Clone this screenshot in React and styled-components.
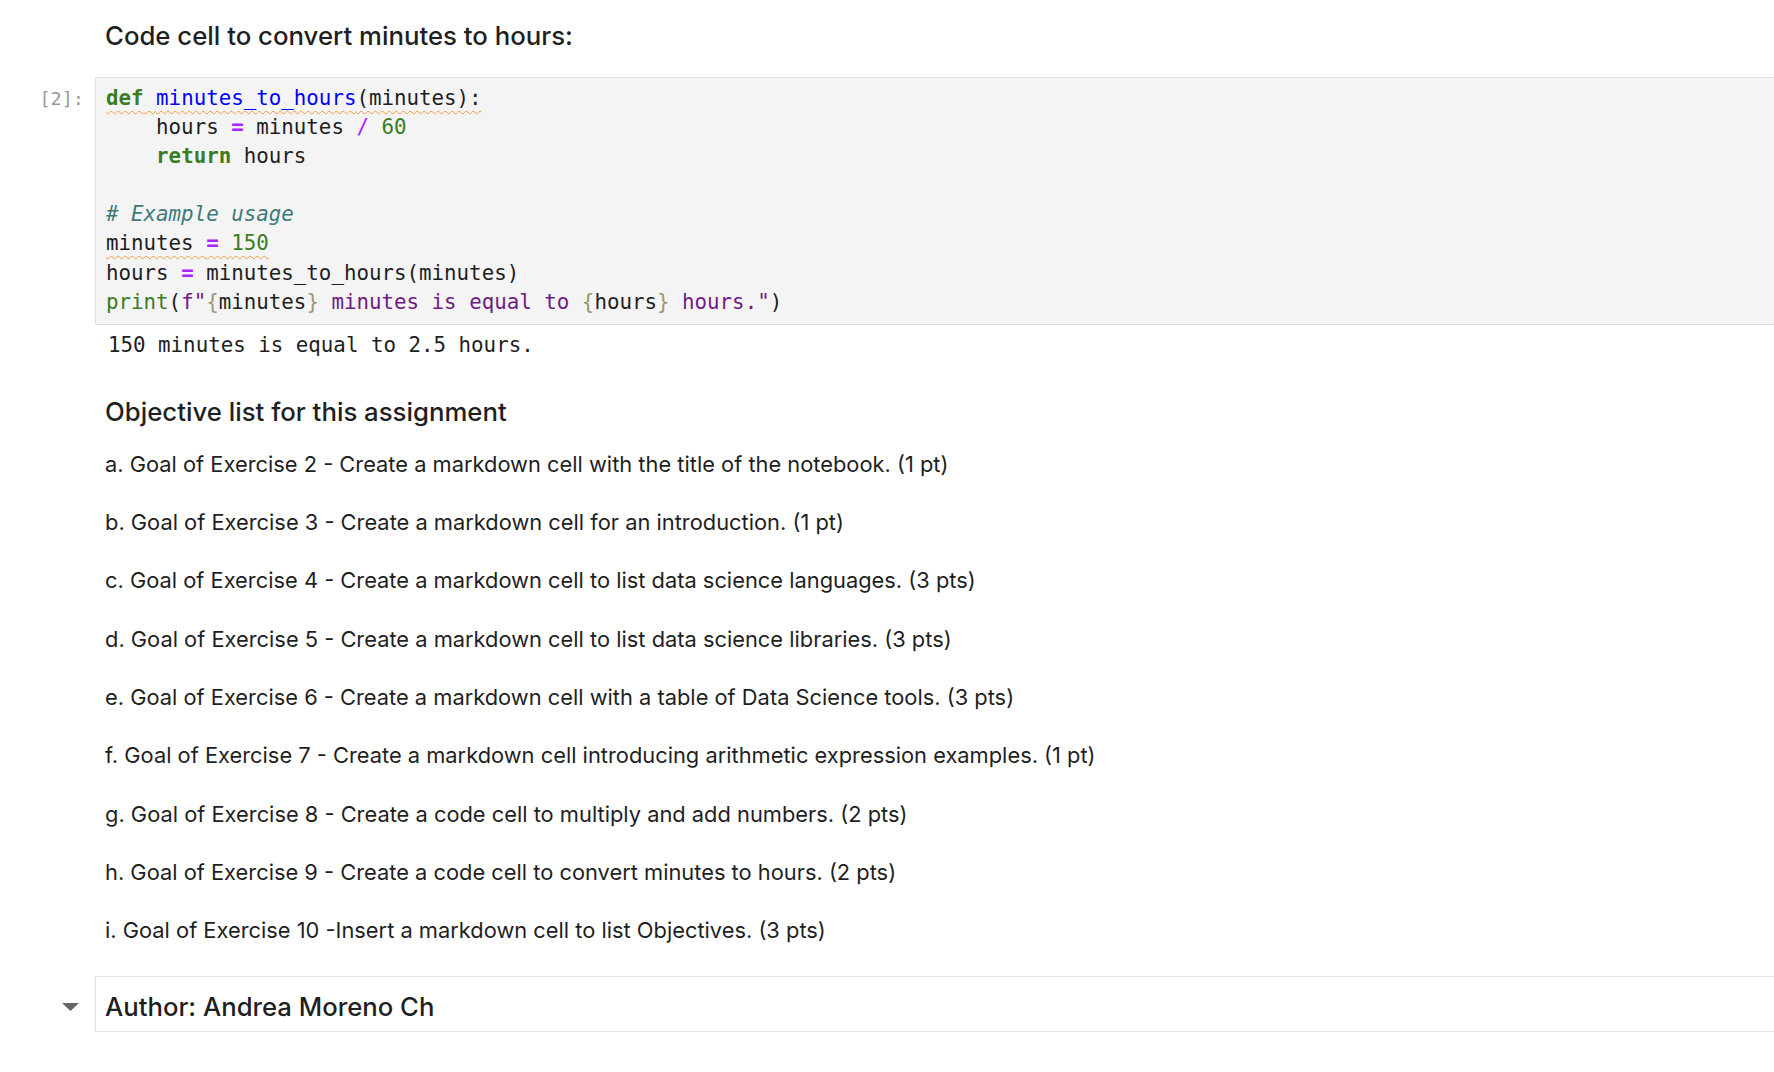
import React from 'react'
import styled, { createGlobalStyle } from 'styled-components'

// page reset + default fonts
const GlobalStyle = createGlobalStyle`
  html, body {
    margin: 0;
    padding: 0;
    background: #ffffff;
  }
  body {
    overflow: hidden;
    font-family: Inter, "Noto Sans", sans-serif;
    color: #212121;
  }
`

const Notebook = styled.main`
  display: flex;
  flex-direction: column;
  padding-top: 19px;
`

// every cell: prompt column on the left, content on the right
const Cell = styled.section`
  display: grid;
  grid-template-columns: 95px 1fr;
  margin-top: ${p => p.$gap || 0}px;
`

const Prompt = styled.div`
  display: flex;
  justify-content: flex-end;
  padding: 7px 11px 0 0;
  font-family: "DejaVu Sans Mono", monospace;
  font-size: 18.5px;
  line-height: 29px;
  color: #9a9a9a;
`

const Markdown = styled.div`
  padding-left: 10px;
`

const Heading = styled.h4`
  margin: 0;
  font-size: 25.75px;
  font-weight: 500;
  line-height: 34px;
  color: #1f1f1f;
`

const ObjectiveList = styled.div`
  display: flex;
  flex-direction: column;
  gap: 28.3px;
  margin-top: 20px;
`

const Item = styled.p`
  margin: 0;
  font-size: 21.85px;
  line-height: 30px;
  color: #1f1f1f;
`

// code editor box
const Editor = styled.pre`
  margin: 0 -2px 0 0;
  padding: 6px 10px 7px;
  background: #f4f4f4;
  border: 1px solid #e0e0e0;
  font-family: "DejaVu Sans Mono", monospace;
  font-size: 20.8px;
  line-height: 29.1px;
  color: #1e1e1e;
  white-space: pre;
`

const Tok = styled.span`
  color: ${p => p.$c || 'inherit'};
  font-weight: ${p => (p.$bold ? 700 : 400)};
  font-style: ${p => (p.$italic ? 'italic' : 'normal')};
`

const Squiggle = styled.span`
  text-decoration: underline wavy #f39a3c;
  text-decoration-thickness: 1px;
  text-underline-offset: 5px;
`

const Output = styled.div`
  margin-top: 6px;
  padding-left: 13px;
  font-family: "DejaVu Sans Mono", monospace;
  font-size: 20.8px;
  line-height: 29.1px;
  color: #1e1e1e;
  white-space: pre;
`

const Collapser = styled.div`
  display: flex;
  justify-content: flex-end;
  align-items: center;
  padding: 6px 16px 0 0;
`

const AuthorBox = styled.div`
  margin-right: -2px;
  padding: 13px 9px 7px;
  border: 1px solid #e0e0e0;
`

const AuthorTitle = styled.h3`
  margin: 0;
  font-size: 25.7px;
  font-weight: 500;
  line-height: 34px;
  color: #1f1f1f;
`

const GREEN = '#3a7d1f'
const BLUE = '#0000ff'
const OP = '#aa22ff'
const STR = '#701a86'
const BRACE = '#999972'
const COMMENT = '#3f7a7a'

const objectives = [
  'a. Goal of Exercise 2 - Create a markdown cell with the title of the notebook. (1 pt)',
  'b. Goal of Exercise 3 - Create a markdown cell for an introduction. (1 pt)',
  'c. Goal of Exercise 4 - Create a markdown cell to list data science languages. (3 pts)',
  'd. Goal of Exercise 5 - Create a markdown cell to list data science libraries. (3 pts)',
  'e. Goal of Exercise 6 - Create a markdown cell with a table of Data Science tools. (3 pts)',
  'f. Goal of Exercise 7 - Create a markdown cell introducing arithmetic expression examples. (1 pt)',
  'g. Goal of Exercise 8 - Create a code cell to multiply and add numbers. (2 pts)',
  'h. Goal of Exercise 9 - Create a code cell to convert minutes to hours. (2 pts)',
  'i. Goal of Exercise 10 -Insert a markdown cell to list Objectives. (3 pts)',
]

const CaretDown = () => (
  <svg width="17" height="8" viewBox="0 0 17 8">
    <path d="M0 0 H17 L8.5 8 Z" fill="#666666" />
  </svg>
)

export default function App() {
  return (
    <>
      <GlobalStyle />
      <Notebook>
        <Cell>
          <div />
          <Markdown>
            <Heading>Code cell to convert minutes to hours:</Heading>
          </Markdown>
        </Cell>

        <Cell $gap={24}>
          <Prompt>[2]:</Prompt>
          <Editor>
            <Squiggle>
              <Tok $c={GREEN} $bold>def</Tok> <Tok $c={BLUE}>minutes_to_hours</Tok>(minutes):
            </Squiggle>
            {'\n    hours '}
            <Tok $c={OP} $bold>=</Tok> minutes <Tok $c={OP}>/</Tok> <Tok $c={GREEN}>60</Tok>
            {'\n    '}
            <Tok $c={GREEN} $bold>return</Tok> hours
            {'\n\n'}
            <Tok $c={COMMENT} $italic># Example usage</Tok>
            {'\n'}
            <Squiggle>
              minutes <Tok $c={OP} $bold>=</Tok> <Tok $c={GREEN}>150</Tok>
            </Squiggle>
            {'\nhours '}
            <Tok $c={OP} $bold>=</Tok> minutes_to_hours(minutes)
            {'\n'}
            <Tok $c={GREEN}>print</Tok>(<Tok $c={STR}>f"</Tok>
            <Tok $c={BRACE}>{'{'}</Tok>minutes<Tok $c={BRACE}>{'}'}</Tok>
            <Tok $c={STR}> minutes is equal to </Tok>
            <Tok $c={BRACE}>{'{'}</Tok>hours<Tok $c={BRACE}>{'}'}</Tok>
            <Tok $c={STR}> hours."</Tok>)
          </Editor>
        </Cell>

        <Cell>
          <div />
          <Output>150 minutes is equal to 2.5 hours.</Output>
        </Cell>

        <Cell $gap={35}>
          <div />
          <Markdown>
            <Heading>Objective list for this assignment</Heading>
            <ObjectiveList>
              {objectives.map(text => (
                <Item key={text}>{text}</Item>
              ))}
            </ObjectiveList>
          </Markdown>
        </Cell>

        <Cell $gap={31}>
          <Collapser>
            <CaretDown />
          </Collapser>
          <AuthorBox>
            <AuthorTitle>Author: Andrea Moreno Ch</AuthorTitle>
          </AuthorBox>
        </Cell>
      </Notebook>
    </>
  )
}
